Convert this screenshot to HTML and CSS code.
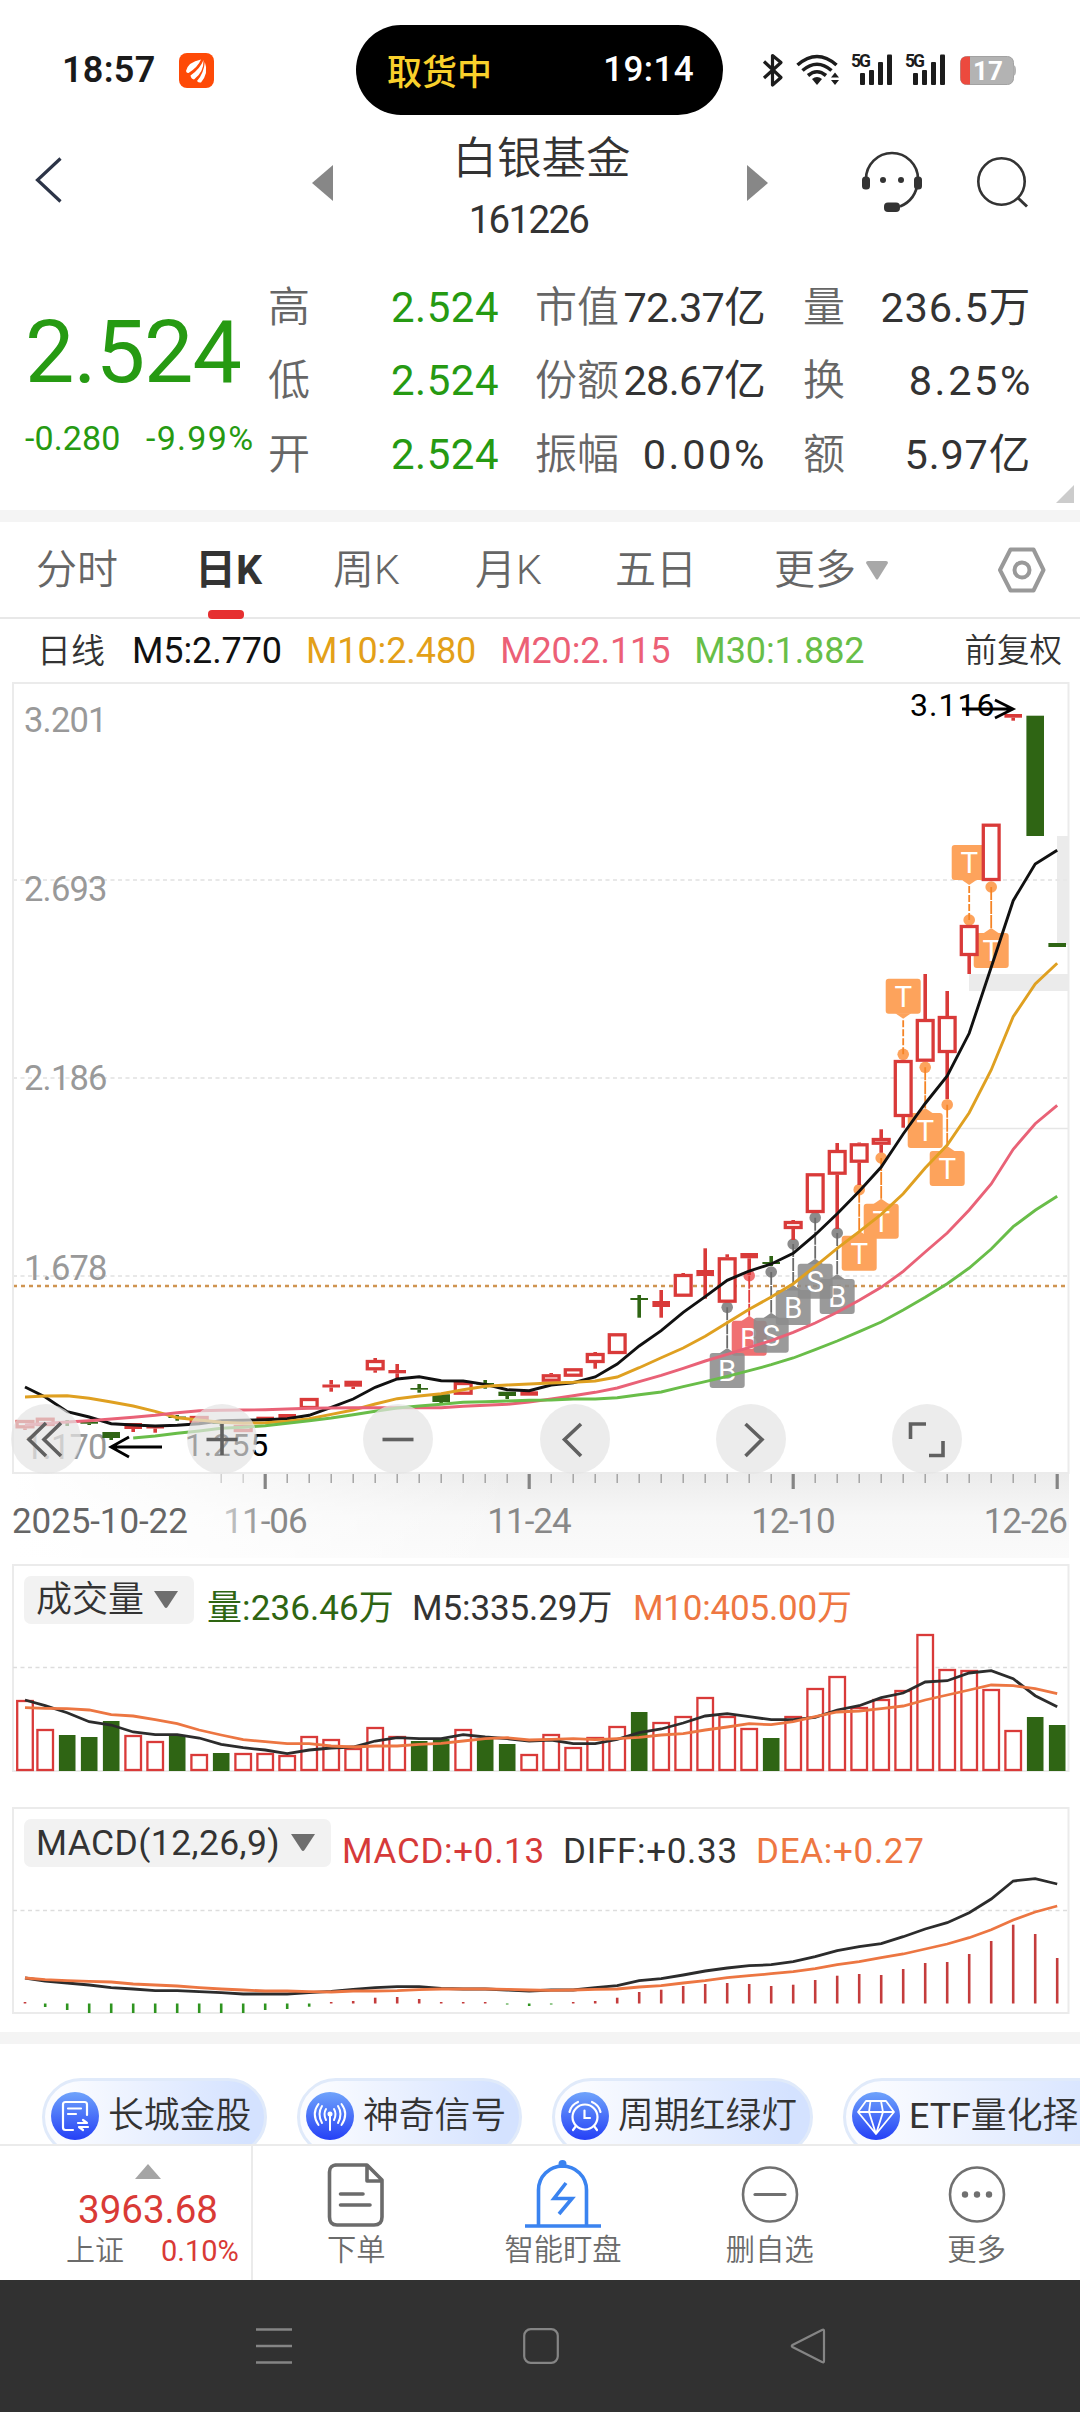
FILE: index.html
```html
<!DOCTYPE html>
<html lang="zh-CN">
<head>
<meta charset="utf-8">
<title>白银基金 161226</title>
<link rel="stylesheet" href="styles.css">
</head>
<body>
<div class="screen">

<div class="status">
  <span class="clock">18:57</span>
  <svg class="app-icon" width="35" height="35" viewBox="0 0 35 35"><rect width="35" height="35" rx="8" fill="#fe4a07"/><path d="M7 18Q9 9 22 6.500Q19 14 9.500 20Q7.500 20.500 7 18ZM11.500 22.500Q21 16 24.500 7Q25 19 15 26.500Q12 26 11.500 22.500ZM18 28Q25 20 25.800 9Q30 20 22 29.500Q19.500 30 18 28Z" fill="#fff"/></svg>
  <div class="island"><span class="island-state">取货中</span><span class="island-time">19:14</span></div>
  <svg class="sys-icons" width="260" height="40" viewBox="760 50 260 40">
    <path d="M764 61.500L781 77.500L772.500 85V55.500L781 62.500L764 78" fill="none" stroke="#1c1c1c" stroke-width="3.200" stroke-linejoin="round"/>
    <g fill="none" stroke="#1c1c1c" stroke-width="3.600"><path d="M797.500 65Q817 48 836.500 65"/><path d="M802.500 70.500Q817 58 831.500 70.500"/><path d="M808 75.500Q817 68 826 75.500"/></g>
    <path d="M812 79Q817 75 822 79L817 85Z" fill="#1c1c1c"/>
    <path d="M835 72.500L839 77.500H831ZM835 85L831 80H839Z" fill="#1c1c1c"/>
    <g fill="#1c1c1c"><rect x="860" y="73" width="5" height="12" rx="1"/><rect x="869" y="70" width="5" height="15" rx="1"/><rect x="878" y="62" width="5" height="23" rx="1"/><rect x="887" y="54.500" width="5" height="30.500" rx="1"/>
    <rect x="913" y="73" width="5" height="12" rx="1"/><rect x="922" y="70" width="5" height="15" rx="1"/><rect x="931" y="62" width="5" height="23" rx="1"/><rect x="940" y="54.500" width="5" height="30.500" rx="1"/></g>
    <text x="851" y="67" class="net" textLength="20">5G</text><text x="905" y="67" class="net" textLength="20">5G</text>
    <rect x="960.500" y="56.500" width="53" height="28" rx="6" fill="#b3b3b3" stroke="#a2a2a2"/><path d="M1013.500 65.500h1q1.500 1 1.500 5t-1.500 5h-1z" fill="#b3b3b3"/>
    <path d="M970 56.500h-3.500q-6 0-6 6v16q0 6 6 6H970z" fill="#ec4a3e"/>
    <text x="973" y="80" class="bat">17</text>
  </svg>
</div>

<div class="header">
  <svg class="back" width="30" height="48" viewBox="0 0 30 48"><path d="M26.500 2.500L3.500 24L26.500 45.500" fill="none" stroke="#2c3447" stroke-width="3.200"/></svg>
  <svg class="prev" width="21" height="36"><path d="M21 0V36L0 18Z" fill="#878787"/></svg>
  <div class="title"><div class="name">白银基金</div><div class="code">161226</div></div>
  <svg class="next" width="21" height="36"><path d="M0 0V36L21 18Z" fill="#878787"/></svg>
  <svg class="tools" width="170" height="64" viewBox="860 150 170 64">
    <g fill="none" stroke="#333" stroke-width="2.600"><path d="M866 179A26 26 0 0 1 918 179V181Q916 200 900 206.500"/><circle cx="1001.500" cy="181.500" r="23.200"/><path d="M1017.500 197.500L1027 206.500" stroke-width="3"/></g>
    <g fill="#333"><rect x="862" y="176.500" width="8" height="13" rx="3.500"/><rect x="914" y="176.500" width="8" height="13" rx="3.500"/><rect x="884" y="202.500" width="16" height="9.500" rx="4"/><circle cx="883" cy="180" r="3"/><circle cx="901" cy="180" r="3"/></g>
  </svg>
</div>

<div class="quote">
  <div class="price"><div class="last">2.524</div><div class="change"><span>-0.280</span><span class="pct">-9.99%</span></div></div>
  <div class="stats s1"><div><label>高</label><b>2.524</b></div><div><label>低</label><b>2.524</b></div><div><label>开</label><b>2.524</b></div></div>
  <div class="stats s2"><div><label>市值</label><b>72.37亿</b></div><div><label>份额</label><b>28.67亿</b></div><div><label>振幅</label><b class="pct">0.00%</b></div></div>
  <div class="stats s3"><div><label>量</label><b>236.5万</b></div><div><label>换</label><b class="pct">8.25%</b></div><div><label>额</label><b>5.97亿</b></div></div>
  <svg class="corner" width="18" height="18"><path d="M18 0V18H0Z" fill="#ccc"/></svg>
</div>
<div class="band"></div>

<div class="tabs">
  <span class="t1">分时</span><span class="t2 on">日K</span><span class="t3">周K</span><span class="t4">月K</span><span class="t5">五日</span>
  <span class="t6">更多<svg width="24" height="20"><path d="M1 2Q1 0 3 0H21Q23 0 23 2L13 18Q12 19 11 18Z" fill="#a8a8a8"/></svg></span>
  <svg class="hex" width="50" height="48" viewBox="0 0 50 48"><path d="M13.500 3.500H36.500L46.500 24L36.500 44.500H13.500L3 24Z" fill="none" stroke="#999" stroke-width="4" stroke-linejoin="round"/><circle cx="25" cy="24" r="7.500" fill="none" stroke="#999" stroke-width="4"/></svg>
</div>

<div class="ma">
  <span class="kind">日线</span><span class="m5">M5:2.770</span><span class="m10">M10:2.480</span><span class="m20">M20:2.115</span><span class="m30">M30:1.882</span><span class="adj">前复权</span>
</div>

<div class="kline">
  <svg id="kline" width="1080" height="876" viewBox="0 682 1080 876"></svg>
  <div class="controls">
    <i><svg viewBox="0 0 70 70"><path d="M35 19L18 35.500L35 52M50 19L33 35.500L50 52"/></svg></i>
    <i><svg viewBox="0 0 70 70"><path d="M35 20V51M19.500 35.500H50.500"/></svg></i>
    <i><svg viewBox="0 0 70 70"><path d="M19.500 35.500H50.500"/></svg></i>
    <i><svg viewBox="0 0 70 70"><path d="M41 20L24.500 35.500L41 52"/></svg></i>
    <i><svg viewBox="0 0 70 70"><path d="M29.500 20L46 35.500L29.500 52"/></svg></i>
    <i><svg viewBox="0 0 70 70"><path d="M18.500 35V20H34M37 51.500H51V37"/></svg></i>
  </div>
</div>

<div class="panel vol">
  <svg id="volume" width="1080" height="208" viewBox="0 1564 1080 208"></svg>
  <div class="legend">
    <span class="pick">成交量<svg width="24" height="18"><path d="M0 0H24L13.500 16Q12 18 10.500 16Z" fill="#6e6e6e"/></svg></span>
    <span class="v1">量:236.46万</span><span class="v2">M5:335.29万</span><span class="v3">M10:405.00万</span>
  </div>
</div>

<div class="panel macd">
  <svg id="macd" width="1080" height="208" viewBox="0 1807 1080 208"></svg>
  <div class="legend">
    <span class="pick">MACD(12,26,9)<svg width="24" height="18"><path d="M0 0H24L13.500 16Q12 18 10.500 16Z" fill="#6e6e6e"/></svg></span>
    <span class="c1">MACD:+0.13</span><span class="c2">DIFF:+0.33</span><span class="c3">DEA:+0.27</span>
  </div>
</div>
<div class="band"></div>

<svg class="defs" width="0" height="0"><defs><linearGradient id="blue" x1="0" y1="0" x2="0" y2="1"><stop offset="0" stop-color="#6fa3fb"/><stop offset="1" stop-color="#2540f6"/></linearGradient></defs></svg>
<div class="chips">
  <div class="chip c-a"><svg width="48" height="48" viewBox="0 0 48 48"><circle cx="24" cy="24" r="24" fill="url(#blue)"/><g fill="none" stroke="#fff" stroke-width="2.200" stroke-linecap="round" stroke-linejoin="round"><path d="M22 38H14.500Q12 38 12 35.500V12.500Q12 10 14.500 10H33.500Q36 10 36 12.500V23M17 16.500H30M17 22H25M27 31H36L32 28M37 35H28L32 38"/></g></svg>长城金股</div>
  <div class="chip c-b"><svg width="48" height="48" viewBox="0 0 48 48"><circle cx="24" cy="24" r="24" fill="url(#blue)"/><circle cx="24" cy="22" r="2.500" fill="#fff"/><g fill="none" stroke="#fff" stroke-width="2" stroke-linecap="round"><path d="M24 23V38M20 17Q17 22 20 28M28 17Q31 22 28 28M16 14Q11 22 16 31M32 14Q37 22 32 31M12.500 12Q5 22 12.500 33M35.500 12Q43 22 35.500 33"/></g></svg>神奇信号</div>
  <div class="chip c-c"><svg width="48" height="48" viewBox="0 0 48 48"><circle cx="24" cy="24" r="24" fill="url(#blue)"/><g fill="none" stroke="#fff" stroke-width="2.200" stroke-linecap="round"><circle cx="24" cy="25" r="12.500"/><path d="M23.500 18.500V26H29M15 34L12 38M33 34L36 38M8.500 20Q10 13 17 10M39.500 20Q38 13 31 10"/></g></svg>周期红绿灯</div>
  <div class="chip c-d"><svg width="48" height="48" viewBox="0 0 48 48"><circle cx="24" cy="24" r="24" fill="url(#blue)"/><path d="M14 9H34L42 20L24 42L6 20ZM18.500 9L17 20L24 42L31 20L29 9M6 20H42" fill="none" stroke="#fff" stroke-width="1.800" stroke-linejoin="round"/></svg><span><em>ETF</em>量化择</span></div>
</div>

<div class="bottom">
  <div class="index"><svg width="26" height="15"><path d="M13 0L26 15H0Z" fill="#a5a5a5"/></svg><div class="val">3963.68</div><div class="sub"><span>上证</span><em>0.10%</em></div></div>
  <div class="act"><svg width="76" height="68" viewBox="0 0 76 68"><g fill="none" stroke="#6b6b6b" stroke-width="3.600" stroke-linejoin="round" stroke-linecap="round"><path d="M17 5H49L64 20V57Q64 65 56 65H19Q11.500 65 11.500 57V12Q11.500 5 19 5M49 5V21H64M22.500 34H45M22.500 45H52"/></g></svg>下单</div>
  <div class="act"><svg width="76" height="68" viewBox="0 0 76 68"><g fill="none" stroke="#3a83f0" stroke-width="3.600"><path d="M13.500 66V30A24 24 0 0 1 61.500 30V66M0 66H76" /><path d="M41 23L29 38.500H47L34 54"/></g><circle cx="37.500" cy="4" r="4" fill="#3a83f0"/></svg>智能盯盘</div>
  <div class="act"><svg width="76" height="68" viewBox="0 0 76 68"><circle cx="38" cy="34.500" r="27" fill="none" stroke="#707070" stroke-width="2.600"/><path d="M23 34.500H53" stroke="#707070" stroke-width="3.200" stroke-linecap="round"/></svg>删自选</div>
  <div class="act"><svg width="76" height="68" viewBox="0 0 76 68"><circle cx="38" cy="34.500" r="27" fill="none" stroke="#707070" stroke-width="2.600"/><g fill="#707070"><circle cx="26" cy="34.500" r="3.200"/><circle cx="38" cy="34.500" r="3.200"/><circle cx="50" cy="34.500" r="3.200"/></g></svg>更多</div>
</div>

<div class="nav">
  <svg width="36" height="36" viewBox="0 0 36 36"><path d="M0 1.500H36M0 18H36M0 34.500H36" stroke="#858585" stroke-width="2.600"/></svg>
  <svg width="36" height="36" viewBox="0 0 36 36"><rect x="1.200" y="1.200" width="33.600" height="33.600" rx="6.500" fill="none" stroke="#858585" stroke-width="2.200"/></svg>
  <svg width="36" height="36" viewBox="0 0 36 36"><path d="M34 3V33Q34 35 32 34L2.500 19Q1 18 2.500 17L32 2Q34 1 34 3Z" fill="none" stroke="#858585" stroke-width="2.200"/></svg>
</div>

</div>
<script src="charts.js"></script>
</body>
</html>
```
FILE: styles.css
```css
* { box-sizing: border-box; }
body { margin: 0; background: #fff; font-family: Roboto, "Noto Sans CJK SC", sans-serif; color: #333; }
.screen { width: 1080px; height: 2412px; overflow: hidden; display: flex; flex-direction: column; background: #fff; }
.screen > * { flex: none; }
svg { display: block; flex: none; }
span, b, label { white-space: nowrap; }
em { font-style: normal; font-weight: 400; }
.defs { position: absolute; }

.status { height: 120px; display: flex; align-items: flex-start; }
.clock { margin: 48px 0 0 62px; width: 117px; font-size: 36px; line-height: 44px; font-weight: 600; letter-spacing: .3px; color: #1a1a1a; }
.app-icon { margin-top: 53px; }
.island { margin: 25px 0 0 142px; width: 367px; height: 90px; border-radius: 45px; background: #000; display: flex; justify-content: space-between; align-items: center; padding: 0 29px 2px 31px; font-size: 35px; font-weight: 500; color: #fff; }
.island-state { color: #f9d02b; font-size: 35px; }
.island-time { letter-spacing: .4px; }
.sys-icons { margin: 50px 0 0 37px; }
.net { font: 700 17.500px Roboto, sans-serif; fill: #1c1c1c; }
.bat { font: 700 26px Roboto, sans-serif; fill: #fff; }

.header { height: 151px; display: flex; align-items: flex-start; }
.back { margin: 36px 0 0 34px; }
.prev { margin: 45px 0 0 248px; }
.next { margin-top: 45px; }
.title { width: 414px; text-align: center; color: #333; }
.name { margin: 9px 0 0 3px; font-size: 44.500px; line-height: 60px; font-weight: 350; }
.code { margin-left: -23px; margin-top: 2px; font-size: 38.500px; line-height: 58px; letter-spacing: -1.7px; }
.tools { margin: 30px 0 0 92px; }

.quote { height: 239px; display: flex; position: relative; }
.price { width: 268px; padding-left: 25px; color: #269a12; }
.last { margin-top: 26px; font-size: 88px; line-height: 110px; letter-spacing: -1px; }
.change { display: flex; margin-top: 10px; font-size: 34px; line-height: 42px; letter-spacing: .1px; }
.change span { width: 121px; }
.change .pct { letter-spacing: 1.300px; }
.stats div { height: 73.500px; display: flex; justify-content: space-between; align-items: center; font-size: 42px; line-height: 50px; }
.stats label { color: #666; font-size: 42px; font-weight: 350; }
.stats b { font-weight: 400; }
.s1 { width: 231px; color: #269a12; }
.s1 b { letter-spacing: .5px; }
.s2 { width: 230px; margin-left: 36px; }
.s3 { width: 228px; margin-left: 38px; }
.s2 b { font-size: 41.500px; letter-spacing: -.7px; }
.s3 b { font-size: 41.500px; letter-spacing: .8px; }
.stats .pct { letter-spacing: 2.600px; margin-right: -2px; }
.corner { position: absolute; right: 6px; bottom: 7px; }
.band { height: 12px; background: #f4f4f4; }

.tabs { height: 97px; border-bottom: 2px solid #e8e8e8; display: flex; align-items: flex-start; font-size: 41px; line-height: 96px; color: #666; font-weight: 350; }
.tabs span { position: relative; height: 97px; }
.t1 { margin-left: 36px; width: 159px; }
.t2 { width: 138px; }
.t3 { width: 142px; }
.t4 { width: 140px; }
.t5 { width: 159px; }
.t6 { width: 223px; display: flex; gap: 9px; }
.t6 svg { margin-top: 39px; }
.tabs .on { font-weight: 700; color: #333; }
.on::after { content: ""; position: absolute; left: 13px; bottom: 0; width: 36px; height: 9px; border-radius: 4px; background: #e62f30; }
.hex { margin-top: 24px; }

.ma { height: 63px; display: flex; gap: 24px; padding: 0 18px 0 37px; font-size: 36px; line-height: 65px; }
.kind, .adj { font-size: 34px; font-weight: 350; }
.kind { margin-right: 3px; }
.adj { margin-left: auto; font-size: 32.500px; }
.m5 { color: #111; } .m10 { color: #e3a018; } .m20 { color: #ec6076; } .m30 { color: #68be48; }
.ma .m5, .ma .m10, .ma .m20, .ma .m30 { letter-spacing: -0.100px; }

.kline { height: 882px; position: relative; }
.kline text { font-family: Roboto, sans-serif; }
.controls { position: absolute; left: 11px; top: 722px; width: 951px; display: flex; justify-content: space-between; }
.controls i { width: 70px; height: 70px; border-radius: 35px; background: rgba(228,228,228,.7); }
.controls path { fill: none; stroke: #606060; stroke-width: 3.600px; }

.panel { position: relative; height: 208px; }
.panel > svg { position: absolute; left: 0; top: 0; }
.vol { margin-bottom: 35px; }
.macd { margin-bottom: 17px; }
.legend { position: relative; display: flex; padding: 12px 0 0 24px; font-size: 35px; line-height: 66px; }
.pick { display: flex; align-items: center; justify-content: space-between; height: 48px; padding: 0 16px 0 12px; border-radius: 7px; background: #f2f2f2; font-size: 36px; font-weight: 350; line-height: 52px; }
.vol .pick { width: 170px; line-height: 52px; }
.macd .legend { letter-spacing: .7px; line-height: 65px; }
.macd .pick { width: 307px; font-size: 35.500px; font-weight: 400; letter-spacing: .4px; line-height: 50px; }
.v1 { margin-left: 13px; width: 205px; color: #2e6512; letter-spacing: .1px; }
.v2 { width: 221px; letter-spacing: -.1px; } .v3 { color: #ee7742; letter-spacing: -.2px; }
.c1 { margin-left: 11px; width: 221px; color: #d63a39; }
.c2 { width: 193px; } .c3 { color: #ee7742; }

.chips { height: 100px; display: flex; gap: 30px; padding: 34px 0 0 42px; overflow: hidden; }
.chip { flex: none; height: 78px; border-radius: 39px; border: 3px solid #e0eafa; background: linear-gradient(90deg, #fbfcff 8%, #d4e2ff 92%); display: flex; align-items: center; gap: 9px; padding: 0 0 2px 6px; font-size: 35.800px; font-weight: 350; line-height: 50px; white-space: nowrap; }
.c-a, .c-b { width: 225px; } .c-c { width: 261px; } .c-d { width: 300px; }

.bottom { height: 136px; display: flex; border-top: 2px solid #ebebeb; }
.index { width: 253px; border-right: 2px solid #ebebeb; padding-top: 18px; color: #d93a36; }
.index svg { margin-left: 135px; }
.val { margin-left: 78px; font-size: 38.500px; line-height: 62px; }
.sub { display: flex; justify-content: space-between; padding: 0 12px 0 66px; font-size: 29px; line-height: 20px; }
.sub span { color: #6b6b6b; font-weight: 350; }
.act { width: 207px; display: flex; flex-direction: column; align-items: center; padding-top: 14px; font-size: 29.300px; line-height: 44px; color: #6b6b6b; font-weight: 350; }
.nav { height: 132px; background: #313131; display: flex; justify-content: space-between; padding: 48px 254px 0 256px; }
```
FILE: charts.js
```js
const RED = '#d93a39', GREEN = '#2f6514';
const X = i => i ? 23.2 + 22 * i : 25;
const line = (ys, color, w = 2.9, start = 0) =>
  `<polyline fill="none" stroke="${color}" stroke-width="${w}" points="${ys.map((y, k) => X(k + start) + ',' + y).join(' ')}"/>`;
const frame = (y, h) => `<rect x="13" y="${y}" width="1055.500" height="${h}" fill="none" stroke="#ebebeb" stroke-width="2"/>`;
const dash = (y, color = '#e8e8e8', w = 2) => `<path d="M13 ${y}H1068" stroke="${color}" stroke-width="${w}" stroke-dasharray="4 3.500"/>`;

const ma5 = [1387,1397,1411.7,1417,1423.7,1425,1426,1425.3,1423.7,1420.7,1420.3,1419.7,1418.7,1415.3,1407.3,1399,1387.3,1379,1376.7,1380.7,1381,1384.3,1389.7,1390.7,1385,1382.7,1377,1364,1346,1330.7,1312.3,1296.7,1280.3,1271,1264,1253.3,1234.7,1213.7,1191.3,1167,1134,1103.5,1076,1033.3,967.3,900.7,864,850.3];
const ma10 = [1397,1396,1395.7,1398.3,1402,1406,1411.3,1417.7,1420,1422.3,1423.3,1422.7,1421.3,1418.7,1414.3,1410,1404,1398.7,1396,1393.7,1389.7,1386.3,1385,1384,1383,1382.3,1381,1377,1367.7,1357.7,1348,1336.3,1322.7,1309.3,1297,1283.7,1266.3,1248.3,1231.7,1214.3,1193.7,1168,1145,1112.7,1070,1016.7,984,963.3];
const ma20 = [1425,1423.5,1422,1420.7,1419,1417.3,1415.3,1412.7,1410.7,1410.3,1410,1409.7,1409,1408.3,1408,1407.7,1407.7,1407.7,1407.7,1407.7,1406.3,1405.3,1404.3,1402,1399,1395.7,1392.3,1388,1381.7,1375.3,1368.3,1361,1354.3,1347.3,1340.7,1332.3,1323,1312.3,1300.3,1287.3,1271.3,1252,1233,1210,1184,1149.3,1123.7,1105.3];
const ma30 = [1438,1436,1433.3,1431,1428.3,1427.3,1425.7,1423.3,1420.7,1418,1414.7,1411.3,1408,1406,1404.3,1402.3,1401.7,1401,1400.3,1400,1399,1399,1397.7,1394.7,1392,1386.7,1381.7,1376.3,1370.7,1364.7,1358,1349.7,1341,1331.7,1322,1310,1297.3,1283.7,1268,1249,1226.7,1210.3,1196.3];

// direction, high, body top, body bottom, low
const candles = [
['r',1420,1420,1428.3,1430],['r',1417.7,1417.7,1426,1426],['g',1420,1421,1423,1426],['g',1421.7,1421.7,1423.7,1425],['g',1432,1432,1438,1440],['r',1423,1423,1429,1432],['r',1426,1426,1428.5,1432.7],['g',1415,1416.5,1418,1420.7],
['r',1416,1416,1423,1423],['g',1421,1421,1424,1426],['r',1425,1425,1432,1432],['r',1416.7,1416.7,1420,1420],['r',1414,1414,1418.7,1418.7],['r',1398,1398,1409,1409],['r',1380,1384.5,1387.5,1391.7],['r',1380.7,1380.7,1386.7,1389],
['r',1358,1360,1370.3,1372.7],['r',1364,1370,1373.3,1378],['g',1384,1388,1389.7,1392.7],['g',1394.3,1394.3,1402,1403.7],['r',1382,1382,1394.7,1394.7],['g',1380,1383,1384.7,1388.7],['g',1391.7,1391.7,1396,1399],['r',1391.3,1391.3,1395.7,1395.7],
['r',1373,1374.3,1381.7,1381.7],['r',1368.3,1368.3,1376.7,1376.7],['r',1352,1353,1363,1368.7],['r',1333.3,1333.3,1354,1354],['g',1295,1298,1300,1317.7],['r',1290,1301,1307,1317.7],['r',1273,1274,1296.7,1296.7],['r',1248.3,1270,1276,1298.7],
['r',1254.3,1257.3,1302.7,1302.7],['r',1253,1253,1258.3,1275],['g',1256,1262,1264,1266],['r',1220,1221,1229,1240],['r',1173.3,1173.3,1213,1213],['r',1143,1150,1174.7,1229],['r',1142.5,1143.3,1162.7,1185],['r',1129.3,1138,1144.7,1152.7],
['r',1060,1060,1117,1127.7],['r',974,1019,1061.7,1061.7],['r',991,1016,1053,1099],['r',925,925,956,974],['r',823.7,823.7,881,881],['r',714,714,717.7,720.7],['g',715.7,715.7,836,836],['g',943,943,947,947]];

// index, letter, dot y, tag top, [tag colour, stem colour]
const O = ['#fda35c', '#f58426'], G = ['#8c8c8c', '#6b6b6b'], R = ['#f07072', '#e23b3b'];
const marks = [[43,'T',920,845,O],[44,'T',887,933,O],[40,'T',1054.3,978.7,O],[41,'T',1067.3,1113,O],[42,'T',1104.7,1151,O],[39,'T',1158,1203.7,O],[38,'T',1189.7,1235.7,O],
[37,'B',1233,1279,G],[36,'S',1217.7,1263.7,G],[35,'B',1244,1290,G],[33,'B',1275.7,1320.7,R],[34,'S',1272,1317.7,G],[32,'B',1307.3,1353,G]];

let s = `<defs><linearGradient id="axv" x1="0" y1="0" x2="0" y2="1"><stop offset="0" stop-color="#ececec"/><stop offset=".5" stop-color="#f7f7f7"/><stop offset="1" stop-color="#fafafa"/></linearGradient>
<linearGradient id="axh"><stop offset="0" stop-color="#fff"/><stop offset=".35" stop-color="#fff" stop-opacity=".75"/><stop offset="1" stop-color="#fff" stop-opacity="0"/></linearGradient>
<linearGradient id="fade"><stop offset="0" stop-color="#ccc"/><stop offset=".55" stop-color="#888"/></linearGradient></defs>
<rect x="13" y="1474" width="1056" height="84" fill="url(#axv)"/><rect x="12" y="1474" width="500" height="84" fill="url(#axh)"/>`;
s += '<path d="M1057 836h12v109h-12zM969 974h100v17h-100z" fill="#ebebeb"/><path d="M903 1128.500H1068" stroke="#e6e6e6" stroke-width="1.500"/>';
s += dash(880) + dash(1078) + dash(1276) + '<path d="M13 1286H1068" stroke="#cf9450" stroke-width="2.300" stroke-dasharray="4 4"/>' + frame(683, 790);
[['3.201',732],['2.693',901],['2.186',1090],['1.678',1279.5],['1.170',1459]].forEach(([t, y]) => s += `<text x="24" y="${y}" font-size="34.500" letter-spacing="-.8" fill="#999">${t}</text>`);
marks.forEach(([i, t, dot, top, c]) => {
  const x = X(i), up = dot > top, edge = up ? top + 40 : top - 5, base = up ? top + 34.5 : top + .5;
  s += `<circle cx="${x}" cy="${dot}" r="5.800" fill="${c[0]}"/><path d="M${x} ${dot}V${edge}" stroke="${c[1]}" stroke-width="1.800" stroke-dasharray="${up ? '7 2' : '13 1'}"/>
  <path d="M${x - 8} ${base}L${x} ${edge}L${x + 8} ${base}Z" fill="${c[0]}"/><rect x="${x - 17.5}" y="${top}" width="35" height="35" rx="3" fill="${c[0]}" ${c === G ? 'fill-opacity=".88"' : ''}/>
  <text x="${x}" y="${top + 28}" font-size="29.500" fill="#fff" text-anchor="middle">${t}</text>`;
});
candles.forEach(([d, h, t, b, l], i) => {
  const x = X(i), c = d === 'r' ? RED : GREEN;
  if (h < t) s += `<path d="M${x} ${h}V${t}" stroke="${c}" stroke-width="3.600"/>`;
  if (l > b) s += `<path d="M${x} ${b}V${l}" stroke="${c}" stroke-width="3.600"/>`;
  s += d === 'r' && b - t > 6.5
    ? `<rect x="${x - 7.9}" y="${t + 1.5}" width="15.800" height="${b - t - 3}" fill="#fff" stroke="${c}" stroke-width="3.300"/>`
    : `<rect x="${x - 8.8}" y="${t}" width="17.600" height="${b - t}" fill="${c}"/>`;
});
s += line(ma5, '#111') + line(ma10, '#dfa021') + line(ma20, '#e96277') + line(ma30, '#69bd49', 2.9, 5);
s += `<path d="M962 709H1012M995 700L1013 709L995 718M162 1447H112M129 1437L111 1447L129 1457" fill="none" stroke="#000" stroke-width="2.800"/>
<text x="910" y="716" font-size="32" letter-spacing="1" fill="#000">3.116</text><text x="185" y="1456" font-size="32" letter-spacing=".7" fill="#000">1.255</text>`;
for (let i = 9; i < 48; i++) {
  const big = (i - 11) % 12 === 0;
  s += `<path d="M${X(i)} 1474V${big ? 1489 : 1483}" stroke="${big ? '#858585' : i < 11 ? '#ccc' : '#a0a0a0'}" stroke-width="${big ? 3.2 : 1.4}"/>`;
}
const date = (x, t, a, f, ls = -1) => `<text x="${x}" y="1533" font-size="35" letter-spacing="${ls}" text-anchor="${a}" fill="${f}">${t}</text>`;
s += date(12, '2025-10-22', 'start', '#666', -.1) + date(265, '11-06', 'middle', 'url(#fade)') + date(529, '11-24', 'middle', '#888') + date(793, '12-10', 'middle', '#888') + date(1067, '12-26', 'end', '#888');
document.getElementById('kline').innerHTML = s;

const vols = [1701,1730,-1736,-1738,-1722,1736,1742,-1737,1755,-1754,1754,1754,1756,1737,1740,1749,1728,1737,-1742,-1740,1730,-1740,-1745,1755,1735,1748,1738,1727,-1713,1723,1717,1698,1717,1729,-1739,1717,1689,1677,1708,1700,1691,1635,1670,1671,1690,1731,-1718,-1726];
const v5 = [1700,1705.7,1712.7,1721.7,1725,1732,1734.7,1734.7,1738,1744.3,1747.7,1750,1753.7,1750,1748,1747,1741,1737.7,1738.7,1738.7,1734.7,1737,1738.7,1741,1740,1743.7,1743.7,1739.3,1732.7,1729,1723,1716,1713.7,1716.7,1719.7,1719.7,1717.3,1710,1705.7,1697.7,1693,1682,1680.7,1673,1670.7,1678.7,1695.7,1706.7];
const v10 = [1707.7,1708.3,1708.7,1710,1714.7,1716,1719.7,1723.7,1730,1735,1739.7,1741.7,1743.7,1743.7,1746,1747,1746,1746,1744.3,1743.3,1741,1738.7,1737.7,1740,1739.3,1738.7,1739.7,1738.7,1737.3,1735,1733.7,1730,1727,1723.7,1724.7,1721.7,1716.7,1712,1711,1708.7,1706,1700,1695,1690,1685,1685.7,1688.7,1693.7];
s = frame(1565, 206) + dash(1667.5, '#ddd', 1.3);
vols.forEach((v, i) => {
  const y = Math.abs(v), x = X(i);
  s += v > 0 ? `<rect x="${x - 7.8}" y="${y}" width="15.600" height="${1770 - y}" fill="#fff" stroke="${RED}" stroke-width="2.300"/>`
    : `<rect x="${x - 8.3}" y="${y - 1}" width="16.600" height="${1772 - y}" fill="${GREEN}"/>`;
});
document.getElementById('volume').innerHTML = s + line(v5, '#2c2c2c', 2.8) + line(v10, '#ec7642', 2.8);

const hist = [2002,2007,2010,2013,2013,2013,2013,2013,2013,2013,2013,2010,2009,2006.7,2002,2001,1997.7,1997,1999,2002,2002,2002,2004.5,2006,2004.5,2002,2001,1997.7,1992,1989.7,1986,1984,1983,1984,1986,1984.7,1980,1975.7,1974,1975,1969,1963,1962,1954,1941,1924.7,1934,1958];
const diff = [1978,1981,1983,1985,1987.7,1989,1990.7,1990.7,1991.7,1992.7,1994,1994,1994,1992.7,1991.3,1989.3,1987.7,1986.7,1986.7,1988.3,1989,1989,1990,1991,1990,1990,1987.7,1985.7,1980.7,1978.7,1975,1971,1968,1965.7,1964.7,1961.7,1956.7,1950.7,1946.7,1943.7,1936.7,1929,1922.7,1912.7,1899,1881,1878.7,1884];
const dea = [1978,1979.7,1980.7,1981.3,1982,1984,1985,1986,1987.7,1989,1990,1991,1991,1991.7,1992,1991,1991,1990.7,1989.7,1989,1989,1989,1989.3,1990,1990.3,1990,1989.3,1989,1987,1985.7,1983,1980.7,1977.7,1975.7,1973.7,1971.7,1968.7,1964.7,1961.7,1957.7,1954,1949,1944,1937.7,1929.7,1920,1912,1906];
s = frame(1808, 205) + dash(1910.5, '#ddd', 1.3);
hist.forEach((y, i) => s += `<path d="M${X(i)} 2003.500V${y}" stroke="${y > 2003.5 ? '#2f9420' : '#c43c3c'}" stroke-width="2.600"/>`);
document.getElementById('macd').innerHTML = s + line(diff, '#2c2c2c', 2.8) + line(dea, '#ec7642', 2.8);
```
